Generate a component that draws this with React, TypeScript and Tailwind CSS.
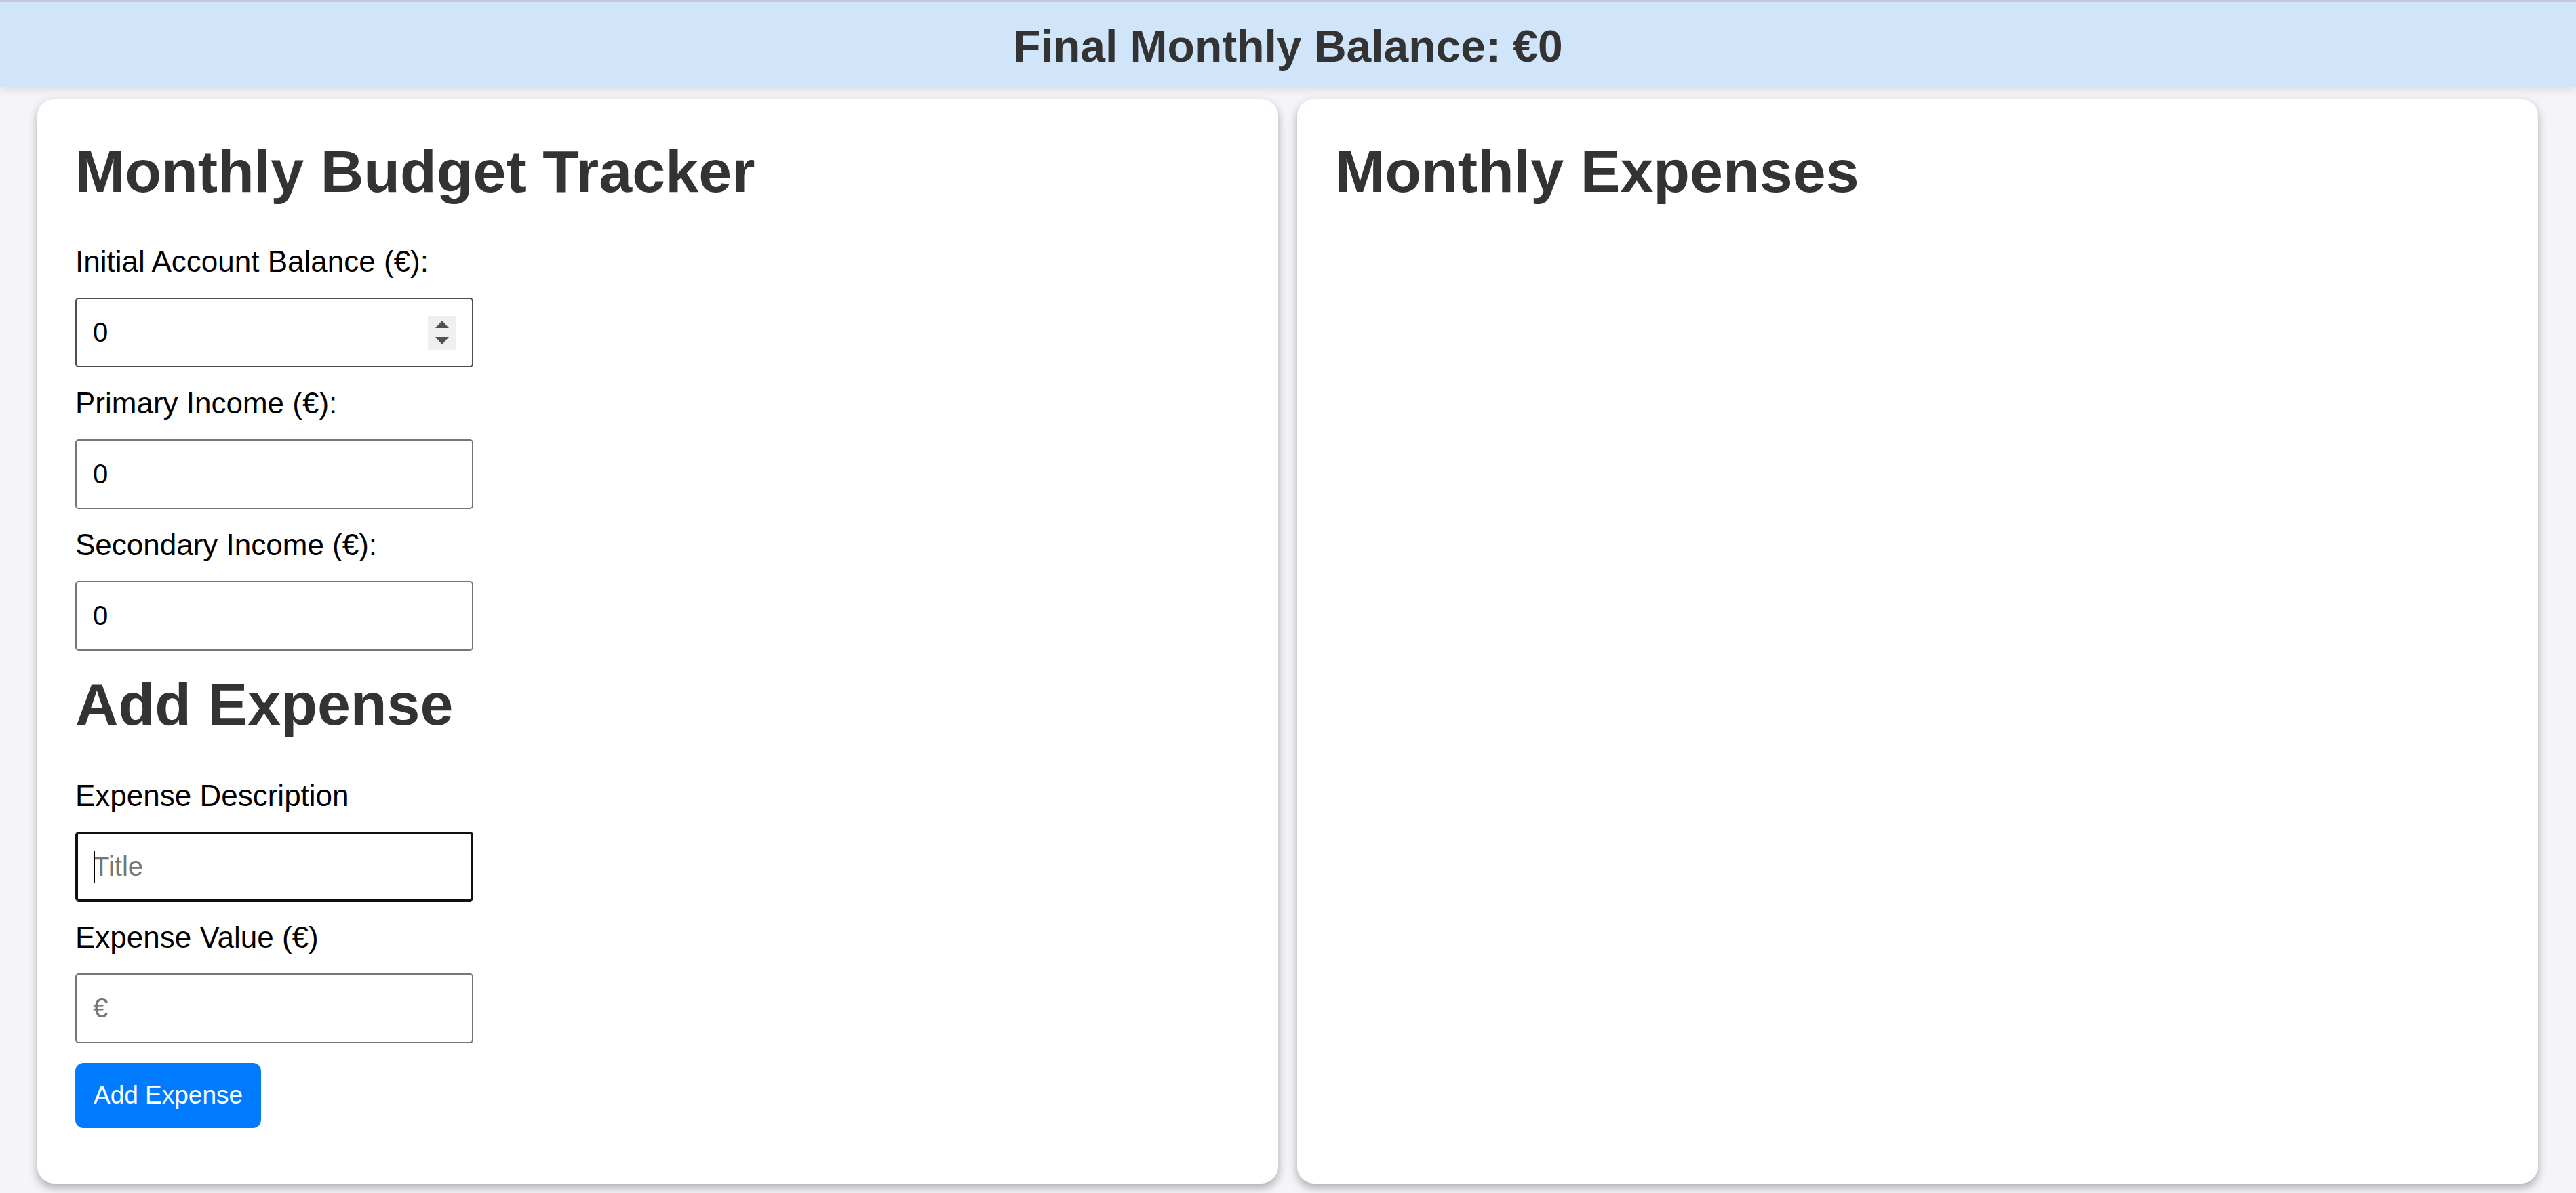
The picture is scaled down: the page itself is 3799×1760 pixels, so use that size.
import React from "react";

function Label({ children }: { children: React.ReactNode }) {
  return <label className="mb-[28px] block text-[44px] leading-[50px] text-black">{children}</label>;
}

function TextBox({ value, placeholder }: { value?: string; placeholder?: string }) {
  return (
    <input
      className="mb-[28px] block h-[103px] w-[587px] rounded-[5px] border-2 border-[#767676] bg-white px-[24px] text-[40px] text-black outline-none placeholder:text-[#757575]"
      defaultValue={value}
      placeholder={placeholder}
      readOnly
    />
  );
}

function Spinner() {
  return (
    <div className="mr-[24px] h-[50px] w-[41px] shrink-0 bg-[#efefef]">
      <svg width="41" height="50" viewBox="0 0 41 50">
        <polygon points="21,7 11,18 31,18" fill="#505050" />
        <polygon points="11,31 31,31 21,42" fill="#505050" />
      </svg>
    </div>
  );
}

export default function App() {
  return (
    <div className="flex h-screen flex-col bg-[#f4f4f9] font-['Liberation_Sans',Arial,sans-serif]">
      <header className="relative z-10 h-[128px] shrink-0 border-t-[3px] border-[#c6c6de] bg-[#d0e4fa] pt-[27px] text-center text-[66px] font-bold leading-[77px] text-[#333] shadow-[0_5px_12px_rgba(0,0,0,0.1)]">
        Final Monthly Balance: €0
      </header>
      <main className="flex min-h-0 flex-1 gap-[28px] pb-[14px] pl-[55px] pr-[56px] pt-[18px]">
        <section className="flex-1 rounded-[25px] bg-white p-[56px] shadow-[0_6px_14px_rgba(0,0,0,0.3)]">
          <h1 className="mb-[58px] text-[88px] font-bold leading-[101px] text-[#333]">Monthly Budget Tracker</h1>

          <Label>Initial Account Balance (€):</Label>
          <div className="mb-[28px] flex h-[103px] w-[587px] items-center rounded-[5px] border-2 border-[#4f4f4f] bg-white">
            <input
              className="h-full min-w-0 flex-1 bg-transparent pl-[24px] text-[40px] text-black outline-none"
              defaultValue="0"
              readOnly
            />
            <Spinner />
          </div>

          <Label>Primary Income (€):</Label>
          <TextBox value="0" />

          <Label>Secondary Income (€):</Label>
          <TextBox value="0" />

          <h2 className="mb-[60px] text-[88px] font-bold leading-[101px] text-[#333]">Add Expense</h2>

          <Label>Expense Description</Label>
          <div className="relative mb-[28px] w-[587px]">
            <input
              className="block h-[103px] w-[587px] rounded-[5px] border-2 border-[#101010] bg-white px-[24px] text-[40px] text-black shadow-[inset_0_0_0_2px_#101010] outline-none placeholder:text-[#757575]"
              placeholder="Title"
              readOnly
            />
            <span className="absolute left-[27px] top-[28px] h-[48px] w-[2px] bg-black" />
          </div>

          <Label>Expense Value (€)</Label>
          <TextBox placeholder="€" />

          <button className="mt-[1px] rounded-[12px] bg-[#007bff] px-[27px] py-[27px] text-[37px] leading-[42px] text-white">
            Add Expense
          </button>
        </section>

        <section className="flex-1 rounded-[25px] bg-white p-[56px] shadow-[0_6px_14px_rgba(0,0,0,0.3)]">
          <h2 className="text-[88px] font-bold leading-[101px] text-[#333]">Monthly Expenses</h2>
        </section>
      </main>
    </div>
  );
}
